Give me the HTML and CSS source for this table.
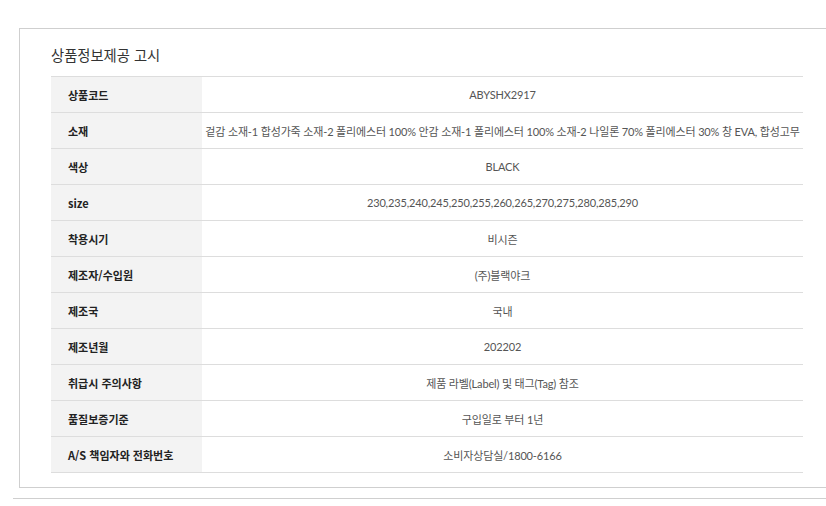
FILE: index.html
```html
<!DOCTYPE html>
<html lang="ko">
<head>
    <meta charset="UTF-8">
    <meta name="viewport" content="width=device-width, initial-scale=1.0">
    <title>상품정보제공 고시</title>
    <link rel="stylesheet" href="styles.css">
</head>
<body>
    <div class="page">
        <!-- 상품정보제공 고시 -->
        <div class="notice">
            <h2 class="notice-title">상품정보제공 고시</h2>
            <table class="info-table">
                <tr><th>상품코드</th><td>ABYSHX2917</td></tr>
                <tr><th>소재</th><td>겉감 소재-1 합성가죽 소재-2 폴리에스터 100% 안감 소재-1 폴리에스터 100% 소재-2 나일론 70% 폴리에스터 30% 창 EVA, 합성고무</td></tr>
                <tr><th>색상</th><td>BLACK</td></tr>
                <tr><th>size</th><td>230,235,240,245,250,255,260,265,270,275,280,285,290</td></tr>
                <tr><th>착용시기</th><td>비시즌</td></tr>
                <tr><th>제조자/수입원</th><td>(주)블랙야크</td></tr>
                <tr><th>제조국</th><td>국내</td></tr>
                <tr><th>제조년월</th><td>202202</td></tr>
                <tr><th>취급시 주의사항</th><td>제품 라벨(Label) 및 태그(Tag) 참조</td></tr>
                <tr><th>품질보증기준</th><td>구입일로 부터 1년</td></tr>
                <tr><th>A/S 책임자와 전화번호</th><td>소비자상담실/1800-6166</td></tr>
            </table>
        </div>
        <div class="divider"></div>
    </div>
</body>
</html>
```

FILE: styles.css
```css
*{
    margin: 0;
    padding: 0;
    box-sizing: border-box;
}
body {
    background: #fff;
    font-family: "Noto Sans CJK KR", "Noto Sans", sans-serif;
    overflow: hidden;
}
.page {
    padding: 28px 0 0 13px;
}
.notice {
    margin-left: 6px;
    border: 1px solid #cfcfcf;
    border-right: none;
    padding: 14px 0 14px 31px;
}
.notice-title {
    font-size: 14.3px;
    font-weight: 400;
    line-height: 24px;
    color: #333;
    margin-bottom: 9px;
}
.info-table {
    width: 752px;
    table-layout: fixed;
    border-collapse: collapse;
    border-top: 1px solid #ddd;
}
.info-table tr {
    height: 36px;
    border-bottom: 1px solid #ddd;
}
.info-table th {
    width: 151px;
    background: #f3f3f3;
    text-align: left;
    padding-left: 17px;
    font-size: 11px;
    font-weight: 700;
    color: #222;
}
.info-table td {
    text-align: center;
    font-family: "Lato", "Noto Sans CJK KR", sans-serif;
    font-size: 11px;
    letter-spacing: -0.15px;
    color: #555;
    white-space: nowrap;
}
.divider {
    margin-top: 10px;
    border-top: 1px solid #cfcfcf;
}
```
